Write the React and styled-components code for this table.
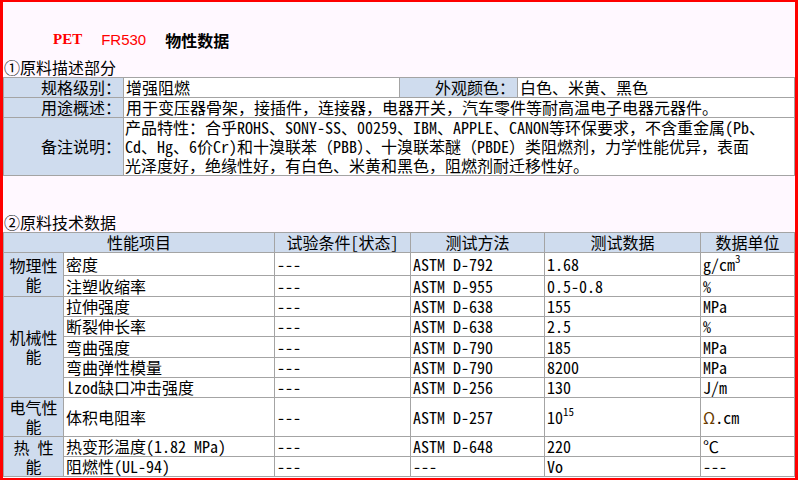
import styled, { createGlobalStyle } from "styled-components";

const GlobalStyle = createGlobalStyle`
  html, body {
    margin: 0;
    padding: 0;
    background: #ffffff;
  }
  body {
    font-family: "Noto Sans Mono CJK SC", "Noto Sans CJK SC", monospace;
    font-size: 16px;
    color: #000;
  }
`;

const Page = styled.div`
  width: 798px;
  height: 480px;
  box-sizing: border-box;
  border: 3px solid #ff0000;
  border-top-width: 2px;
  border-bottom-width: 2px;
  background: #fff8ff;
  overflow: hidden;
`;

const Title = styled.div`
  height: 55px;
  box-sizing: border-box;
  padding: 20px 0 0 50px;
  display: flex;
  align-items: center;
  gap: 19px;
`;

const Code = styled.span`
  color: #ff0000;
  font-family: ${(p) => (p.$serif ? '"Liberation Serif", serif' : '"Liberation Sans", sans-serif')};
  font-weight: ${(p) => (p.$serif ? 700 : 400)};
  font-size: 15px;
`;

const Name = styled.span`
  font-family: "Noto Sans CJK SC", sans-serif;
  font-weight: 700;
  font-size: 16px;
`;

const Heading = styled.div`
  height: 20px;
  line-height: 20px;
  padding-left: 1px;
  margin-top: ${(p) => p.$gap || 0}px;
`;

const Table = styled.table`
  width: 100%;
  border-collapse: collapse;
  table-layout: fixed;
  background: #ffffff;
`;

const Cell = styled.td`
  border: 1px solid #a4a4a4;
  padding: 0 2px;
  height: ${(p) => p.$h || 19}px;
  line-height: 19px;
  white-space: nowrap;
  vertical-align: middle;
  text-align: ${(p) => p.$align || "left"};
  background: ${(p) => (p.$head ? "#cfdcee" : "#ffffff")};
`;

const Note = styled(Cell)`
  white-space: nowrap;
  height: auto;
  padding: 0 2px 0 1px;
`;

const Sup = styled.sup`
  font-size: 11px;
  line-height: 0;
  vertical-align: 8px;
`;

const Ohm = styled.span`
  color: #6a3c00;
`;

const props = [
  {
    group: ["物理性", "能"],
    rows: [
      { h: 22, cells: ["密度", "---", "ASTM D-792", "1.68", <>g/cm<Sup>3</Sup></>] },
      { h: 20, cells: ["注塑收缩率", "---", "ASTM D-955", "0.5-0.8", "%"] },
    ],
  },
  {
    group: ["机械性", "能"],
    rows: [
      { cells: ["拉伸强度", "---", "ASTM D-638", "155", "MPa"] },
      { cells: ["断裂伸长率", "---", "ASTM D-638", "2.5", "%"] },
      { h: 20, cells: ["弯曲强度", "---", "ASTM D-790", "185", "MPa"] },
      { cells: ["弯曲弹性模量", "---", "ASTM D-790", "8200", "MPa"] },
      { cells: ["lzod缺口冲击强度", "---", "ASTM D-256", "130", "J/m"] },
    ],
  },
  {
    group: ["电气性", "能"],
    rows: [
      { h: 38, cells: ["体积电阻率", "---", "ASTM D-257", <>10<Sup>15</Sup></>, <><Ohm>Ω</Ohm>.cm</>] },
    ],
  },
  {
    group: ["热\u00a0性", "能"],
    rows: [
      { cells: ["热变形温度(1.82 MPa)", "---", "ASTM D-648", "220", "℃"] },
      { cells: ["阻燃性(UL-94)", "---", "---", "Vo", "---"] },
    ],
  },
];

function DescTable() {
  return (
    <Table>
      <colgroup>
        <col style={{ width: 120 }} />
        <col style={{ width: 276 }} />
        <col style={{ width: 118 }} />
        <col />
      </colgroup>
      <tbody>
        <tr>
          <Cell $head $align="right">规格级别：</Cell>
          <Cell>增强阻燃</Cell>
          <Cell $head $align="right">外观颜色：</Cell>
          <Cell>白色、米黄、黑色</Cell>
        </tr>
        <tr>
          <Cell $head $align="right">用途概述：</Cell>
          <Cell colSpan={3}>用于变压器骨架，接插件，连接器，电器开关，汽车零件等耐高温电子电器元器件。</Cell>
        </tr>
        <tr>
          <Cell $head $align="right">备注说明：</Cell>
          <Note colSpan={3}>
            产品特性：合乎ROHS、SONY-SS、00259、IBM、APPLE、CANON等环保要求，不含重金属(Pb、
            <br />
            Cd、Hg、6价Cr)和十溴联苯（PBB）、十溴联苯醚（PBDE）类阻燃剂，力学性能优异，表面
            <br />
            光泽度好，绝缘性好，有白色、米黄和黑色，阻燃剂耐迁移性好。
          </Note>
        </tr>
      </tbody>
    </Table>
  );
}

function DataTable() {
  return (
    <Table>
      <colgroup>
        <col style={{ width: 60 }} />
        <col style={{ width: 211 }} />
        <col style={{ width: 136 }} />
        <col style={{ width: 134 }} />
        <col style={{ width: 156 }} />
        <col />
      </colgroup>
      <tbody>
        <tr>
          <Cell $head $align="center" colSpan={2}>性能项目</Cell>
          <Cell $head $align="center">试验条件[状态]</Cell>
          <Cell $head $align="center">测试方法</Cell>
          <Cell $head $align="center">测试数据</Cell>
          <Cell $head $align="center">数据单位</Cell>
        </tr>
        {props.map((g) =>
          g.rows.map((r, i) => (
            <tr key={g.group[0] + i}>
              {i === 0 && (
                <Cell $head $align="center" $h={0} rowSpan={g.rows.length}>
                  {g.group[0]}
                  <br />
                  {g.group[1]}
                </Cell>
              )}
              {r.cells.map((v, j) => (
                <Cell key={j} $h={r.h}>{v}</Cell>
              ))}
            </tr>
          ))
        )}
      </tbody>
    </Table>
  );
}

export default function App() {
  return (
    <>
      <GlobalStyle />
      <Page>
        <Title>
          <Code $serif>PET</Code>
          <Code>FR530</Code>
          <Name>物性数据</Name>
        </Title>
        <Heading>①原料描述部分</Heading>
        <DescTable />
        <Heading $gap={36}>②原料技术数据</Heading>
        <DataTable />
      </Page>
    </>
  );
}
